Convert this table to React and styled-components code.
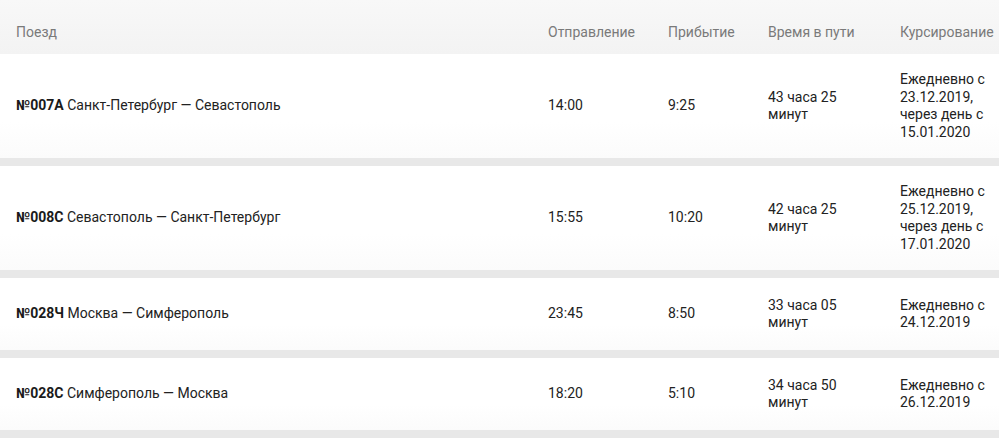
import React from "react";
import styled, { createGlobalStyle } from "styled-components";

const Global = createGlobalStyle`
  html, body { margin: 0; padding: 0; background: #ffffff; }
  body { font-family: Roboto, "Noto Sans", Arial, sans-serif; overflow: hidden; }
`;

const Table = styled.div`
  width: 999px;
  display: flex;
  flex-direction: column;
`;

const Body = styled.div`
  display: flex;
  flex-direction: column;
  gap: 8px;
  background: #e8e8e8;
  padding-bottom: 8px;
`;

const Row = styled.div`
  display: grid;
  grid-template-columns: 532px 120px 100px 132px 115px;
  align-items: center;
  min-height: ${(p) => (p.$header ? "54px" : "72px")};
  box-sizing: border-box;
  background: ${(p) =>
    p.$header
      ? "linear-gradient(#f8f8f8, #f3f3f3)"
      : "linear-gradient(#ffffff 65%, #fbfbfb)"};
  font-size: 14px;
  line-height: 17.5px;
  color: ${(p) => (p.$header ? "#7a7a7a" : "#222222")};
`;

const Cell = styled.div`
  padding: ${(p) => (p.$header ? "24px 16px 12px 16px" : "17px 16px 17px 16px")};
  white-space: ${(p) => (p.$header ? "nowrap" : "normal")};
  align-self: ${(p) => (p.$header ? "stretch" : "center")};
  &:last-child {
    padding-right: 0;
  }
`;

const Num = styled.b`
  font-weight: 700;
  color: #1a1a1a;
`;

const trains = [
  { num: "№007А", route: "Санкт-Петербург — Севастополь", dep: "14:00", arr: "9:25", time: "43 часа 25 минут", course: "Ежедневно с 23.12.2019, через день с 15.01.2020" },
  { num: "№008С", route: "Севастополь — Санкт-Петербург", dep: "15:55", arr: "10:20", time: "42 часа 25 минут", course: "Ежедневно с 25.12.2019, через день с 17.01.2020" },
  { num: "№028Ч", route: "Москва — Симферополь", dep: "23:45", arr: "8:50", time: "33 часа 05 минут", course: "Ежедневно с 24.12.2019" },
  { num: "№028С", route: "Симферополь — Москва", dep: "18:20", arr: "5:10", time: "34 часа 50 минут", course: "Ежедневно с 26.12.2019" },
];

export default function App() {
  return (
    <>
      <Global />
      <Table>
        <Row $header>
          <Cell $header>Поезд</Cell>
          <Cell $header>Отправление</Cell>
          <Cell $header>Прибытие</Cell>
          <Cell $header>Время в пути</Cell>
          <Cell $header>Курсирование</Cell>
        </Row>
        <Body>
          {trains.map((t) => (
            <Row key={t.num}>
              <Cell>
                <Num>{t.num}</Num> {t.route}
              </Cell>
              <Cell>{t.dep}</Cell>
              <Cell>{t.arr}</Cell>
              <Cell>{t.time}</Cell>
              <Cell>{t.course}</Cell>
            </Row>
          ))}
        </Body>
      </Table>
    </>
  );
}
